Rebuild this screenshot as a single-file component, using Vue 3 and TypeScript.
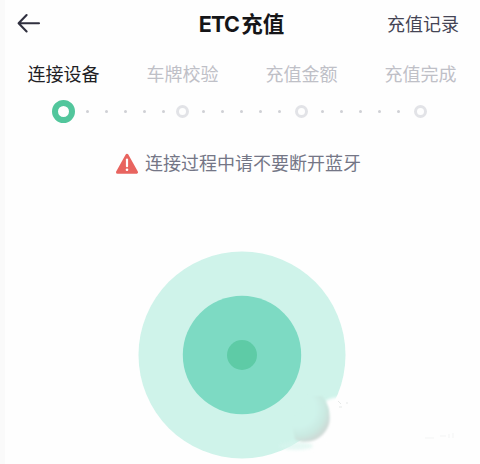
<script setup lang="ts">
interface Step {
  label: string
  active: boolean
}

const steps: Step[] = [
  { label: '连接设备', active: true },
  { label: '车牌校验', active: false },
  { label: '充值金额', active: false },
  { label: '充值完成', active: false },
]
</script>

<template>
  <main class="page">
    <header class="bar">
      <svg class="back" width="26" height="24" viewBox="0 0 26 24" aria-hidden="true">
        <path d="M23 11.2H2.8M10.6 3L2.6 11.2L10.6 19.4" />
      </svg>
      <h1 class="title"><span class="latin">ETC</span>充值</h1>
      <span class="record">充值记录</span>
    </header>

    <div class="labels">
      <span v-for="s in steps" :key="s.label" class="label" :class="{ active: s.active }">{{ s.label }}</span>
    </div>

    <div class="track">
      <template v-for="(s, i) in steps" :key="s.label">
        <i class="node" :class="{ active: s.active }"></i>
        <div v-if="i < steps.length - 1" class="dots" :class="{ first: i === 0 }">
          <i v-for="n in 5" :key="n" class="dot"></i>
        </div>
      </template>
    </div>

    <p class="notice">
      <svg width="24" height="22" viewBox="0 0 24 22" aria-hidden="true">
        <path d="M12 2.2L21.5 19.3H2.5Z" fill="#e8645f" stroke="#e8645f" stroke-width="3" stroke-linejoin="round" />
        <path d="M12 6.5V13.2" stroke="#fff" stroke-width="2.2" stroke-linecap="round" />
        <circle cx="12" cy="16.8" r="1.3" fill="#fff" />
      </svg>
      <span>连接过程中请不要断开蓝牙</span>
    </p>

    <svg class="pulse" width="475" height="222" viewBox="5 242 475 222" aria-hidden="true">
      <defs>
        <radialGradient id="shade" gradientUnits="userSpaceOnUse" cx="298" cy="409" r="36">
          <stop offset="0.5" stop-color="#cff3ea" />
          <stop offset="0.75" stop-color="#cae9e1" />
          <stop offset="0.94" stop-color="#cddad6" />
          <stop offset="1" stop-color="#dbe1df" />
        </radialGradient>
        <filter id="haze" x="-50%" y="-50%" width="200%" height="200%">
          <feGaussianBlur stdDeviation="1.8" />
        </filter>
        <filter id="soft"><feGaussianBlur stdDeviation="0.8" /></filter>
      </defs>
      <circle cx="242" cy="355" r="103.5" fill="#cff3ea" />
      <path d="M344 398Q331 396 325 402Q336 430 314 443L306 444L290 455L346 440Z" fill="#fefefe" filter="url(#haze)" />
      <ellipse cx="296" cy="446" rx="17" ry="4" fill="#d8f5ee" opacity="0.6" filter="url(#haze)" />
      <path d="M310 396H322Q330 406 329.8 418A23.8 23.8 0 0 1 306 441.8Q299 442 295 439L292 425Z" fill="url(#shade)" filter="url(#soft)" />
      <circle cx="242" cy="355" r="59.2" fill="#7ddac3" />
      <circle cx="242" cy="355" r="15" fill="#5ecba6" />
      <path d="M338 401L341 404M339 407H342M347 402V404" stroke="#e6e9e8" fill="none" />
      <path d="M425 438H434M440 436H446M449 434V438M453 433V438" stroke="#f3f4f4" fill="none" />
    </svg>
  </main>
</template>

<style>
body {
  margin: 0;
  background: #fff;
}
</style>

<style scoped>
.page {
  box-sizing: border-box;
  width: 480px;
  height: 464px;
  overflow: hidden;
  border-left: 5px solid #fafafa;
  background: #fefefe;
  font-family: "Liberation Sans", "Noto Sans CJK SC", sans-serif;
}
.bar {
  display: grid;
  grid-template-columns: 124px 1fr 116px;
  align-items: center;
  height: 48px;
  padding: 0 21px 0 11px;
}
.back {
  fill: none;
  stroke: #30303f;
  stroke-width: 2.1;
  stroke-linecap: round;
  stroke-linejoin: round;
}
.title {
  margin: 0;
  text-align: center;
  font-family: Inter, "Noto Sans CJK SC", sans-serif;
  font-size: 21.5px;
  line-height: 30px;
  font-weight: 600;
  color: #151518;
}
.latin {
  margin-right: 2px;
  font-weight: 700;
  letter-spacing: -0.7px;
}
.record {
  padding-top: 2px;
  text-align: right;
  font-size: 18px;
  line-height: 26px;
  color: #454555;
}
.labels {
  display: grid;
  grid-template-columns: repeat(4, 119px);
  margin-left: -1px;
  padding-top: 14px;
}
.label {
  text-align: center;
  font-size: 18px;
  line-height: 26px;
  color: #bfc0c7;
}
.label.active {
  color: #202024;
}
.track {
  display: flex;
  align-items: center;
  height: 24px;
  margin: 11px 0 0 47px;
}
.node {
  box-sizing: border-box;
  flex: none;
  width: 13px;
  height: 13px;
  border: 3px solid #e2e3e7;
  border-radius: 50%;
}
.node.active {
  width: 23px;
  height: 23px;
  border: 6.5px solid #52c69c;
}
.dots {
  display: flex;
  flex: none;
  box-sizing: border-box;
  gap: 16px;
  width: 106px;
  padding-left: 13px;
}
.dots.first {
  width: 101px;
  padding-left: 11px;
}
.dot {
  width: 3px;
  height: 3px;
  border-radius: 50%;
  background: #cfd0d5;
}
.notice {
  display: flex;
  align-items: center;
  gap: 6px;
  height: 28px;
  margin: 27px 0 0 110px;
  font-size: 18px;
  line-height: 28px;
  color: #747686;
}
.pulse {
  display: block;
  margin-top: 64px;
}
</style>
